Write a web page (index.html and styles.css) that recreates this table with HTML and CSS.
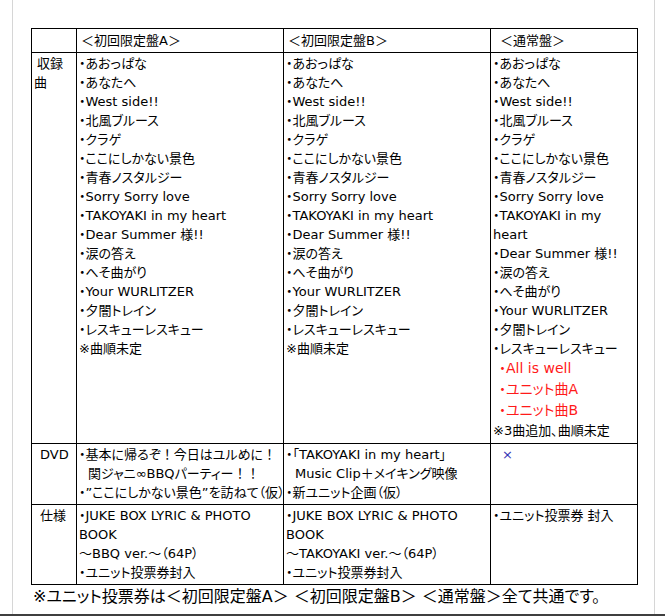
FILE: index.html
```html
<!DOCTYPE html>
<html lang="ja">
<head>
<meta charset="utf-8">
<title>収録内容</title>
<link rel="stylesheet" href="styles.css">
</head>
<body>
<div class="frame">
  <table class="spec">
    <colgroup>
      <col class="c-label">
      <col class="c-a">
      <col class="c-b">
      <col class="c-c">
    </colgroup>
    <tr class="head">
      <td></td>
      <td><span class="h-a">＜初回限定盤A＞</span></td>
      <td><span class="h-b">＜初回限定盤B＞</span></td>
      <td><span class="h-c">＜通常盤＞</span></td>
    </tr>
    <tr class="songs">
      <td class="label"><span class="lbl-songs">収録</span><br>曲</td>
      <td>
        <div>・あおっぱな</div>
        <div>・あなたへ</div>
        <div>・West side!!</div>
        <div>・北風ブルース</div>
        <div>・クラゲ</div>
        <div>・ここにしかない景色</div>
        <div>・青春ノスタルジー</div>
        <div>・Sorry Sorry love</div>
        <div>・TAKOYAKI in my heart</div>
        <div>・Dear Summer 様!!</div>
        <div>・涙の答え</div>
        <div>・へそ曲がり</div>
        <div>・Your WURLITZER</div>
        <div>・夕闇トレイン</div>
        <div>・レスキューレスキュー</div>
        <div>※曲順未定</div>
      </td>
      <td>
        <div>・あおっぱな</div>
        <div>・あなたへ</div>
        <div>・West side!!</div>
        <div>・北風ブルース</div>
        <div>・クラゲ</div>
        <div>・ここにしかない景色</div>
        <div>・青春ノスタルジー</div>
        <div>・Sorry Sorry love</div>
        <div>・TAKOYAKI in my heart</div>
        <div>・Dear Summer 様!!</div>
        <div>・涙の答え</div>
        <div>・へそ曲がり</div>
        <div>・Your WURLITZER</div>
        <div>・夕闇トレイン</div>
        <div>・レスキューレスキュー</div>
        <div>※曲順未定</div>
      </td>
      <td>
        <div>・あおっぱな</div>
        <div>・あなたへ</div>
        <div>・West side!!</div>
        <div>・北風ブルース</div>
        <div>・クラゲ</div>
        <div>・ここにしかない景色</div>
        <div>・青春ノスタルジー</div>
        <div>・Sorry Sorry love</div>
        <div>・TAKOYAKI in my heart</div>
        <div>・Dear Summer 様!!</div>
        <div>・涙の答え</div>
        <div>・へそ曲がり</div>
        <div>・Your WURLITZER</div>
        <div>・夕闇トレイン</div>
        <div>・レスキューレスキュー</div>
        <div class="new">・All is well</div>
        <div class="new">・ユニット曲A</div>
        <div class="new">・ユニット曲B</div>
        <div>※3曲追加、曲順未定</div>
      </td>
    </tr>
    <tr class="dvd">
      <td class="label"><span class="lbl-ind">DVD</span></td>
      <td>
        <div>・基本に帰るぞ<span class="fw">！</span>今日はユルめに<span class="fw">！</span></div>
        <div class="indent">関ジャニ∞BBQパーティー<span class="fw">！！</span></div>
        <div>・”ここにしかない景色”を訪ねて（仮）</div>
      </td>
      <td>
        <div>・「TAKOYAKI in my heart」</div>
        <div class="indent">Music Clip＋メイキング映像</div>
        <div>・新ユニット企画（仮）</div>
      </td>
      <td>
        <div class="none">×</div>
      </td>
    </tr>
    <tr class="goods">
      <td class="label"><span class="lbl-ind">仕様</span></td>
      <td>
        <div>・JUKE BOX LYRIC &amp; PHOTO BOOK</div>
        <div>～BBQ ver.～（64P）</div>
        <div>・ユニット投票券封入</div>
      </td>
      <td>
        <div>・JUKE BOX LYRIC &amp; PHOTO BOOK</div>
        <div>～TAKOYAKI ver.～（64P）</div>
        <div>・ユニット投票券封入</div>
      </td>
      <td>
        <div>・ユニット投票券 封入</div>
      </td>
    </tr>
  </table>
  <p class="note">※ユニット投票券は＜初回限定盤A＞ ＜初回限定盤B＞ ＜通常盤＞全て共通です。</p>
</div>
<div class="bar"></div>
</body>
</html>
```

FILE: styles.css
```css
html, body {
  margin: 0;
  padding: 0;
  background: #ffffff;
}

body {
  font-family: "DejaVu Sans", "Noto Sans CJK JP", sans-serif;
  font-size: 13px;
  line-height: 19px;
  color: #000000;
  font-feature-settings: "palt";
}

.frame {
  margin-left: 12px;
  width: 643px;
  height: 614px;
  box-sizing: border-box;
  border-left: 1px solid #d6d6d6;
  border-right: 1px solid #d6d6d6;
  padding-top: 28px;
  padding-left: 18px;
  overflow: hidden;
}

.bar {
  height: 2px;
  background: #3f3f3f;
}

.spec {
  border-collapse: collapse;
  table-layout: fixed;
  width: 607px;
}

.c-label { width: 45px; }
.c-a { width: 207px; }
.c-b { width: 207px; }
.c-c { width: 147px; }

.spec td {
  border: 1px solid #000000;
  padding: 1px 2px 2px 2px;
  vertical-align: top;
  word-wrap: break-word;
}

.head td {
  padding: 2px 2px 2px 2px;
  vertical-align: middle;
}

.h-a, .h-b { padding-left: 2px; }
.h-c { padding-left: 7px; }

.label { white-space: nowrap; }
.lbl-songs { padding-left: 3px; }
.lbl-ind { padding-left: 6px; }

.songs td { padding-bottom: 3px; }

.dvd td div { white-space: nowrap; }

.fw { font-feature-settings: normal; }

.new {
  color: #ff1a1a;
  font-size: 14px;
  line-height: 21px;
  padding-left: 6px;
}

.indent { padding-left: 9px; }

.none {
  color: #3535b5;
  padding-left: 9px;
}

.note {
  margin: 0;
  padding-left: 2px;
  font-size: 16px;
  line-height: 24px;
}
```
